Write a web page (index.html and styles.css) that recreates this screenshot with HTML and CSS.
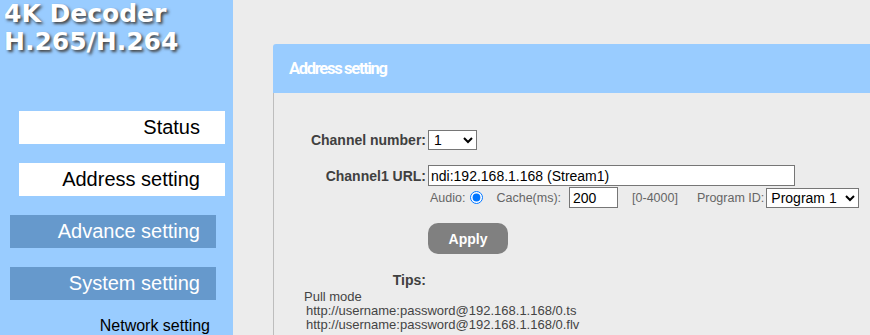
FILE: index.html
```html
<!DOCTYPE html>
<html lang="en">
<head>
    <meta charset="UTF-8">
    <meta name="viewport" content="width=device-width, initial-scale=1.0">
    <title>4K Decoder - Address setting</title>
    <link rel="stylesheet" href="styles.css">
</head>
<body>
    <div class="page">
        <aside class="sidebar">
            <div class="logo">4K Decoder<br>H.265/H.264</div>

            <nav class="menu">
                <a href="#" class="menu-item light">Status</a>
                <a href="#" class="menu-item light">Address setting</a>
                <a href="#" class="menu-item dark">Advance setting</a>
                <a href="#" class="menu-item dark">System setting</a>
            </nav>

            <div class="submenu">
                <a href="#" class="submenu-item">Network setting</a>
            </div>
        </aside>

        <main class="content">
            <div class="panel">
                <div class="panel-head">Address setting</div>

                <form class="panel-body" id="addressForm">
                    <div class="form-row">
                        <label class="form-label" for="channel">Channel number:</label>
                        <select id="channel" class="select-channel">
                            <option>1</option>
                            <option>2</option>
                            <option>3</option>
                            <option>4</option>
                        </select>
                    </div>

                    <div class="form-row url-row">
                        <label class="form-label" for="url">Channel1 URL:</label>
                        <input type="text" id="url" class="input-url" value="ndi:192.168.1.168 (Stream1)">
                    </div>

                    <div class="options-row">
                        <span class="opt-text">Audio:</span>
                        <input type="radio" id="audio" class="opt-radio" checked>
                        <span class="opt-text cache-label">Cache(ms):</span>
                        <input type="text" id="cache" class="input-cache" value="200">
                        <span class="opt-text range">[0-4000]</span>
                        <span class="opt-text program-label">Program ID:</span>
                        <select id="program" class="select-program">
                            <option>Program 1</option>
                            <option>Program 2</option>
                        </select>
                    </div>

                    <button type="submit" class="btn-apply">Apply</button>

                    <div class="form-row tips-row">
                        <span class="form-label">Tips:</span>
                    </div>

                    <div class="tips">
                        <div>Pull mode</div>
                        <div class="tip-url">http://username:password@192.168.1.168/0.ts</div>
                        <div class="tip-url">http://username:password@192.168.1.168/0.flv</div>
                    </div>
                </form>
            </div>
        </main>
    </div>
</body>
</html>
```

FILE: styles.css
```css
body {
    margin: 0;
    font-family: 'Liberation Sans', Arial, sans-serif;
    background-color: #ececec;
    overflow: hidden;
}

.page {
    display: flex;
    height: 100vh;
}

/* left column */
.sidebar {
    width: 233px;
    flex-shrink: 0;
    background-color: #99ccff;
}

.logo {
    font-family: 'DejaVu Sans', Verdana, sans-serif;
    font-weight: bold;
    font-size: 25px;
    line-height: 28px;
    color: #fff;
    text-shadow: 2px 2px 3px #444;
    padding-left: 4px;
}

.menu {
    margin-top: 55px;
    display: flex;
    flex-direction: column;
    gap: 19px;
}

.menu-item {
    display: block;
    width: 206px;
    height: 33px;
    line-height: 33px;
    box-sizing: border-box;
    font-size: 20px;
    text-align: right;
    text-decoration: none;
}

.menu-item.light {
    background-color: #fff;
    color: #000;
    margin-left: 19px;
    padding-right: 25px;
}

.menu-item.dark {
    background-color: #6699cc;
    color: #fff;
    margin-left: 10px;
    padding-right: 16px;
}

.submenu {
    margin-top: 16px;
    text-align: right;
    padding-right: 23px;
}

.submenu-item {
    font-size: 16px;
    line-height: 20px;
    color: #000;
    text-decoration: none;
}

/* main area */
.content {
    flex: 1;
    padding: 44px 0 0 40px;
}

.panel-head {
    height: 49px;
    line-height: 49px;
    padding-left: 16px;
    background-color: #99ccff;
    border-top-left-radius: 3px;
    color: #fff;
    font-family: Roboto, 'Liberation Sans', sans-serif;
    font-weight: bold;
    font-size: 16.5px;
    letter-spacing: -1.3px;
}

.panel-body {
    padding-top: 37px;
    border-left: 1px solid #bdbdbd;
    height: 300px;
}

.form-row {
    display: flex;
    align-items: center;
}

.form-label {
    width: 152px;
    margin-right: 2px;
    text-align: right;
    font-weight: bold;
    font-size: 14px;
    color: #404040;
}

select, input[type="text"] {
    font-family: 'Liberation Sans', Arial, sans-serif;
    font-size: 14px;
    color: #000;
    background-color: #fff;
    border: 1px solid #767676;
    box-sizing: border-box;
    margin: 0;
}

.select-channel {
    width: 49px;
    height: 20px;
    padding: 0 0 0 1px;
}

.url-row {
    margin-top: 15px;
}

.input-url {
    width: 367px;
    height: 21px;
    padding: 0 2px;
    font-size: 14.5px;
}

.options-row {
    display: flex;
    align-items: center;
    margin-top: 1px;
    padding-left: 156px;
}

.opt-text {
    font-size: 12.5px;
    color: #666;
}

.opt-radio {
    width: 13px;
    height: 13px;
    margin: 0 0 0 5px;
}

.cache-label {
    margin-left: 13px;
    margin-right: 8px;
}

.input-cache {
    width: 49px;
    height: 21px;
    padding: 0 3px;
    font-size: 14.5px;
}

.range {
    margin-left: 14px;
}

.program-label {
    margin-left: 19px;
    margin-right: 2px;
}

.select-program {
    width: 93px;
    height: 20px;
    padding: 0;
}

.btn-apply {
    display: block;
    margin: 15px 0 0 154px;
    width: 80px;
    height: 31px;
    border: none;
    border-radius: 10px;
    background-color: #808080;
    color: #fff;
    font-family: 'Liberation Sans', Arial, sans-serif;
    font-weight: bold;
    font-size: 14px;
    cursor: pointer;
}

.tips-row {
    margin-top: 18px;
    line-height: 16px;
}

.tips {
    margin-top: 2px;
    padding-left: 30px;
    font-size: 13px;
    line-height: 14px;
    color: #444;
}

.tip-url {
    padding-left: 2px;
}
```
